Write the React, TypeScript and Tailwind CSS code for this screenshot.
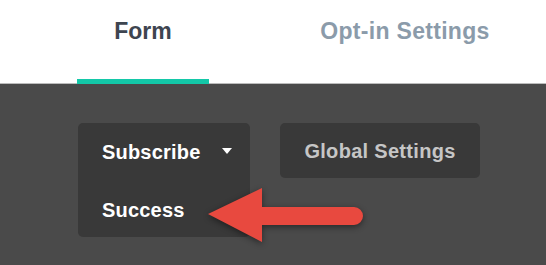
export default function App() {
  return (
    <div className="flex h-screen w-full flex-col bg-[#4a4a4a] font-['Liberation_Sans',Arial,sans-serif] font-bold">
      {/* tabs */}
      <div className="flex h-[84px] shrink-0 border-b border-[#bcbcbc] bg-white pl-[77px]">
        <div className="flex w-[132px] flex-col items-center">
          <span className="pt-[20px] text-[23px] leading-[23px] text-[#3e4550]">Form</span>
          <div className="-mb-px mt-auto h-[5px] w-full bg-[#14c8a8]" />
        </div>
        <div className="ml-[96px] flex w-[200px] flex-col items-center">
          <span className="pt-[20px] text-[23px] leading-[23px] tracking-[0.3px] text-[#8b9baa]">
            Opt-in Settings
          </span>
        </div>
      </div>

      {/* toolbar */}
      <div className="relative flex flex-1 items-start gap-[30px] pl-[78px] pt-[39px]">
        <div className="flex h-[114px] w-[172px] flex-col rounded-[5px] bg-[#393939] pl-[24px] text-[20px] leading-[20px] tracking-[0.2px] text-white">
          <div className="mt-[19px] flex items-center">
            <span>Subscribe</span>
            <svg className="ml-[21px] mt-[-2px]" width="10" height="6" viewBox="0 0 10 6">
              <path d="M0 0h10L5 6z" fill="#ffffff" />
            </svg>
          </div>
          <span className="mt-[38px]">Success</span>
        </div>

        <div className="flex h-[55px] w-[200px] items-center justify-center rounded-[5px] bg-[#393939] text-[20px] leading-[20px] tracking-[0.3px] text-[#c6c6c6]">
          Global Settings
        </div>

        <svg
          className="absolute left-[198px] top-[98px] drop-shadow-[0_2px_3px_rgba(0,0,0,0.45)]"
          width="180"
          height="70"
          viewBox="198 182 180 70"
        >
          <path
            d="M208 214 L262 188 L262 207 L354 207 A9 9 0 0 1 354 225 L262 225 L262 242 Z"
            fill="#e8493f"
          />
        </svg>
      </div>
    </div>
  );
}
